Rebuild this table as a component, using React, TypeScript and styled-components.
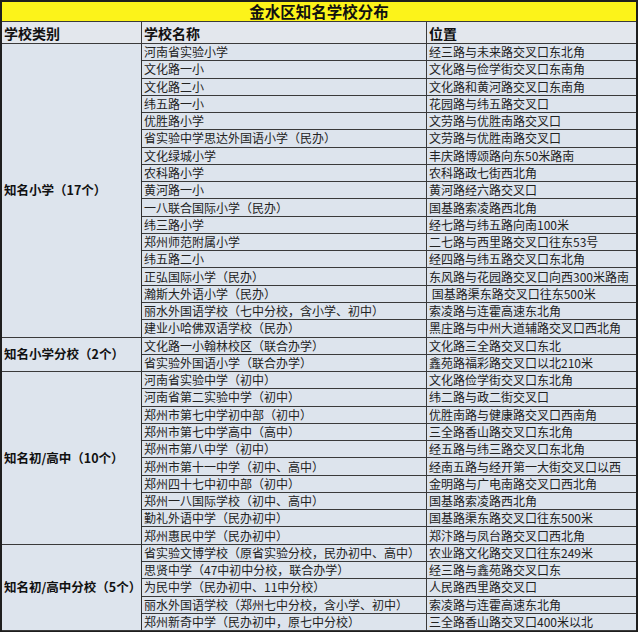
import React from "react";
import styled, { createGlobalStyle } from "styled-components";

const GlobalStyle = createGlobalStyle`
  html, body { margin: 0; padding: 0; background: #ffffff; }
  body { font-family: "Noto Sans CJK SC", "Noto Sans", sans-serif; }
`;

type Group = { label: string; rows: [string, string][] };

const groups: Group[] = [
  {
    label: "知名小学（17个）",
    rows: [
      ["河南省实验小学", "经三路与未来路交叉口东北角"],
      ["文化路一小", "文化路与俭学街交叉口东南角"],
      ["文化路二小", "文化路和黄河路交叉口东南角"],
      ["纬五路一小", "花园路与纬五路交叉口"],
      ["优胜路小学", "文劳路与优胜南路交叉口"],
      ["省实验中学思达外国语小学（民办）", "文劳路与优胜南路交叉口"],
      ["文化绿城小学", "丰庆路博颂路向东50米路南"],
      ["农科路小学", "农科路政七街西北角"],
      ["黄河路一小", "黄河路经六路交叉口"],
      ["一八联合国际小学（民办）", "国基路索凌路西北角"],
      ["纬三路小学", "经七路与纬五路向南100米"],
      ["郑州师范附属小学", "二七路与西里路交叉口往东53号"],
      ["纬五路二小", "经四路与纬五路交叉口东北角"],
      ["正弘国际小学（民办）", "东风路与花园路交叉口向西300米路南"],
      ["瀚斯大外语小学（民办）", " 国基路渠东路交叉口往东500米"],
      ["丽水外国语学校（七中分校，含小学、初中）", "索凌路与连霍高速东北角"],
      ["建业小哈佛双语学校（民办）", "黑庄路与中州大道辅路交叉口西北角"],
    ],
  },
  {
    label: "知名小学分校（2个）",
    rows: [
      ["文化路一小翰林校区（联合办学）", "文化路三全路交叉口东北"],
      ["省实验外国语小学（联合办学）", "鑫苑路福彩路交叉口以北210米"],
    ],
  },
  {
    label: "知名初/高中（10个）",
    rows: [
      ["河南省实验中学（初中）", "文化路俭学街交叉口东北角"],
      ["河南省第二实验中学（初中）", "纬二路与政二街交叉口"],
      ["郑州市第七中学初中部（初中）", "优胜南路与健康路交叉口西南角"],
      ["郑州市第七中学高中（高中）", "三全路香山路交叉口东北角"],
      ["郑州市第八中学（初中）", "经五路与纬三路交叉口东北角"],
      ["郑州市第十一中学（初中、高中）", "经南五路与经开第一大街交叉口以西"],
      ["郑州四十七中初中部（初中）", "金明路与广电南路交叉口西北角"],
      ["郑州一八国际学校（初中、高中）", "国基路索凌路西北角"],
      ["勤礼外语中学（民办初中）", "国基路渠东路交叉口往东500米"],
      ["郑州惠民中学（民办初中）", "郑汴路与凤台路交叉口西北角"],
    ],
  },
  {
    label: "知名初/高中分校（5个）",
    rows: [
      ["省实验文博学校（原省实验分校，民办初中、高中）", "农业路文化路交叉口往东249米"],
      ["思贤中学（47中初中分校，联合办学）", "经三路与鑫苑路交叉口东"],
      ["为民中学（民办初中、11中分校）", "人民路西里路交叉口"],
      ["丽水外国语学校（郑州七中分校，含小学、初中）", "索凌路与连霍高速东北角"],
      ["郑州新奇中学（民办初中，原七中分校）", "三全路香山路交叉口400米以北"],
    ],
  },
];

const totalRows = groups.reduce((n, g) => n + g.rows.length, 0);

const Sheet = styled.div<{ $rows: number }>`
  display: grid;
  width: 634px;
  grid-template-columns: 140px 285px 209px;
  grid-template-rows: 20px 22px repeat(${(p) => p.$rows}, 17.27px);
  border: 2px solid #1e1e1e;
  background: #dde4ed;
  color: #1c1c1c;
`;

const BaseCell = styled.div`
  box-sizing: border-box;
  display: flex;
  align-items: center;
  overflow: hidden;
  white-space: pre;
  border-right: 1px solid #3a3a3a;
  border-bottom: 1px solid #3a3a3a;
  line-height: 1;
`;

const TitleCell = styled(BaseCell)`
  grid-column: 1 / -1;
  justify-content: center;
  overflow: visible;
  padding-top: 1px;
  background: #fcf31a;
  font-size: 15.5px;
  font-weight: 700;
  color: #111;
  border-right: none;
`;

const HeadCell = styled(BaseCell)<{ $col: number }>`
  grid-column: ${(p) => p.$col};
  background: #e3e7ed;
  font-size: 14px;
  font-weight: 700;
  color: #111;
  padding-left: 2px;
  border-right: ${(p) => (p.$col === 3 ? "none" : "1px solid #3a3a3a")};
`;

const CategoryCell = styled(BaseCell)<{ $span: number }>`
  grid-column: 1;
  grid-row: span ${(p) => p.$span};
  font-size: 12.5px;
  font-weight: 700;
  color: #111;
  padding-left: 2px;
  border-right: 1.5px solid #2e2e2e;
`;

const Cell = styled(BaseCell)<{ $col: number }>`
  grid-column: ${(p) => p.$col};
  font-size: 12px;
  padding-left: 2px;
  color: #222;
  border-right: ${(p) => (p.$col === 3 ? "none" : "1px solid #3a3a3a")};
`;

export default function App() {
  return (
    <>
      <GlobalStyle />
      <Sheet $rows={totalRows}>
        <TitleCell>金水区知名学校分布</TitleCell>
        <HeadCell $col={1}>学校类别</HeadCell>
        <HeadCell $col={2}>学校名称</HeadCell>
        <HeadCell $col={3}>位置</HeadCell>
        {groups.map((g) => (
          <React.Fragment key={g.label}>
            <CategoryCell $span={g.rows.length}>{g.label}</CategoryCell>
            {g.rows.map(([name, loc], i) => (
              <React.Fragment key={g.label + i}>
                <Cell $col={2}>{name}</Cell>
                <Cell $col={3}>{loc}</Cell>
              </React.Fragment>
            ))}
          </React.Fragment>
        ))}
      </Sheet>
    </>
  );
}
